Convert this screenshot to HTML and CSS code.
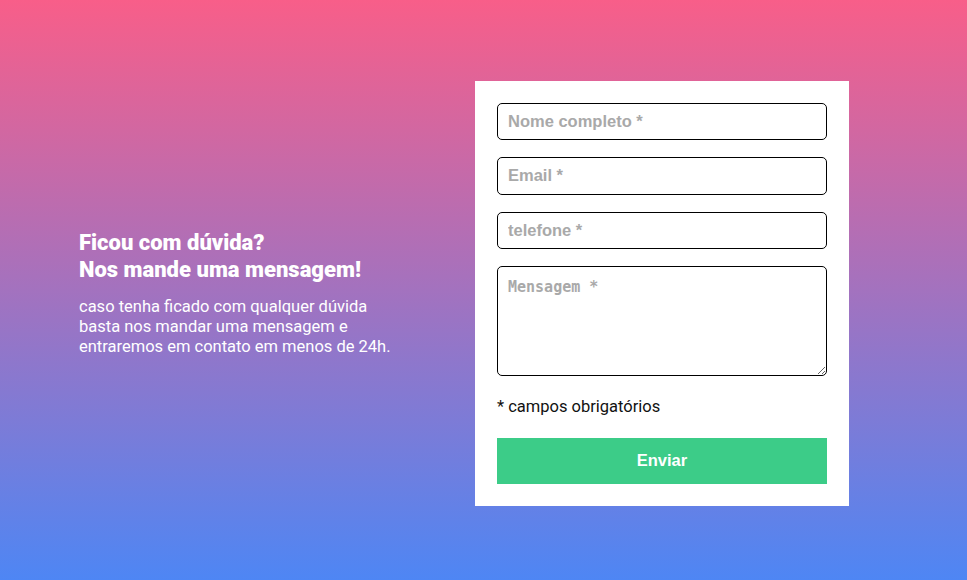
FILE: index.html
```html
<!DOCTYPE html>
<html lang="pt-BR">
<head>
<meta charset="utf-8">
<title>Contato</title>
<link rel="stylesheet" href="styles.css">
</head>
<body>
<main class="page">
  <section class="intro">
    <h1 class="intro-title">Ficou com dúvida?<br>Nos mande uma mensagem!</h1>
    <p class="intro-text">caso tenha ficado com qualquer dúvida basta nos mandar uma mensagem e entraremos em contato em menos de 24h.</p>
  </section>
  <form class="card">
    <input class="field" type="text" placeholder="Nome completo *">
    <input class="field" type="email" placeholder="Email *">
    <input class="field" type="tel" placeholder="telefone *">
    <textarea class="field area" placeholder="Mensagem *"></textarea>
    <p class="note">* campos obrigatórios</p>
    <button class="submit" type="button">Enviar</button>
  </form>
</main>
</body>
</html>
```

FILE: styles.css
```css
html, body {
  margin: 0;
  padding: 0;
}
body {
  height: 580px;
  background: linear-gradient(to bottom, #f85e89 0%, #4e86f4 100%);
  font-family: Roboto, "Liberation Sans", sans-serif;
}
.page {
  height: 580px;
  display: flex;
  align-items: center;
  padding-left: 79px;
  gap: 66px;
  box-sizing: border-box;
  padding-top: 6px;
}
.intro {
  width: 330px;
  color: #fff;
}
.intro-title {
  margin: 0 0 14px;
  font-size: 22px;
  line-height: 27px;
  font-weight: 900;
}
.intro-text {
  margin: 0;
  font-size: 16.5px;
  line-height: 20px;
}
.card {
  width: 374px;
  box-sizing: border-box;
  background: #fff;
  padding: 22px;
  display: flex;
  flex-direction: column;
}
.field {
  box-sizing: border-box;
  width: 330px;
  height: 37.5px;
  margin: 0 0 17px;
  border: 1px solid #000;
  border-radius: 5px;
  padding: 0 10px;
  font-family: "Liberation Sans", Arial, sans-serif;
  font-size: 16.5px;
  font-weight: 700;
  outline: none;
}
.field::placeholder {
  color: #a9a9a9;
}
.area {
  height: 110px;
  padding: 11px 10px;
  resize: vertical;
  font-family: "DejaVu Sans Mono", monospace;
  font-size: 15px;
  margin-bottom: 17.5px;
}
.note {
  margin: 0 0 18px;
  font-size: 16.5px;
  line-height: 26px;
  color: #111;
}
.submit {
  width: 330px;
  height: 46px;
  border: none;
  background: #3ccc88;
  color: #fff;
  font-family: "Liberation Sans", Arial, sans-serif;
  font-size: 16.5px;
  font-weight: 700;
  cursor: pointer;
}
```
